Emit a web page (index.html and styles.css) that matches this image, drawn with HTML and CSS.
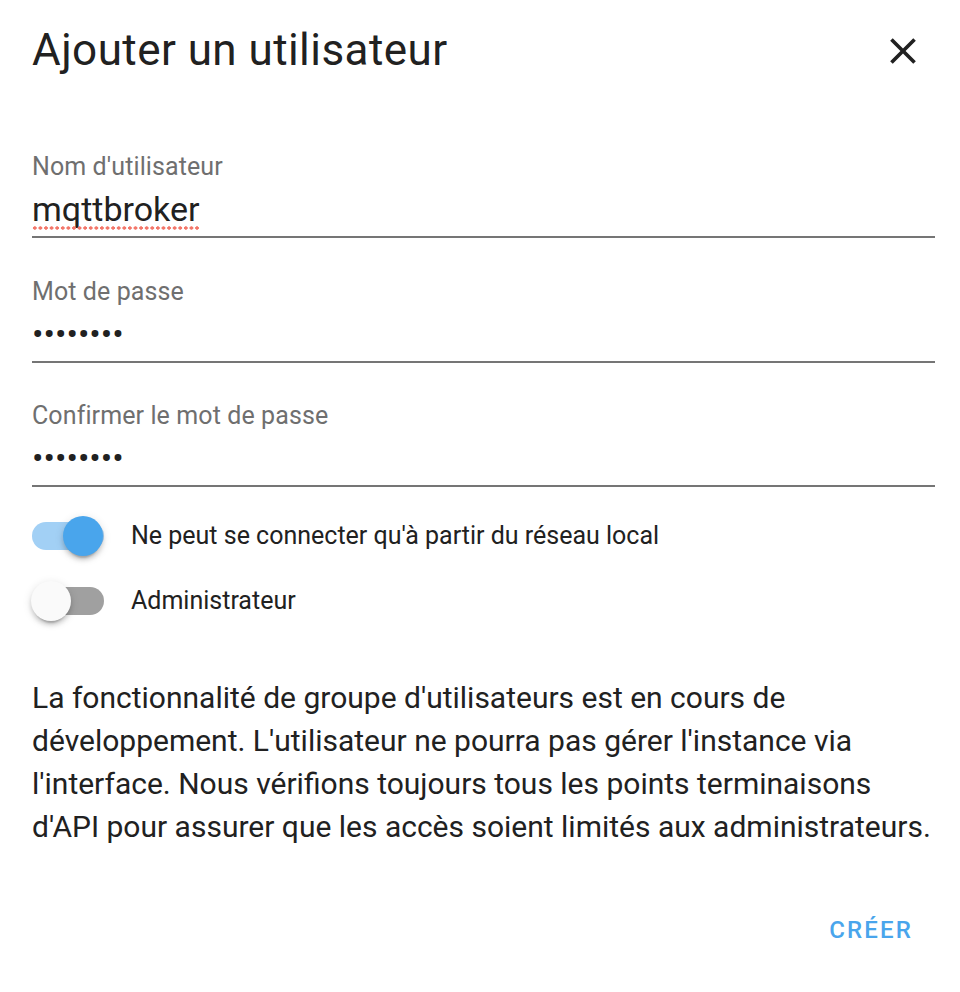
FILE: index.html
```html
<!DOCTYPE html>
<html lang="fr">
<head>
<meta charset="utf-8">
<title>Ajouter un utilisateur</title>
<link rel="stylesheet" href="styles.css">
</head>
<body>
<div class="dialog">
  <header class="header">
    <h1 class="title">Ajouter un utilisateur</h1>
    <svg class="close" viewBox="0 0 24 24" aria-label="Fermer"><path d="M19 6.41L17.59 5 12 10.59 6.41 5 5 6.41 10.59 12 5 17.59 6.41 19 12 13.41 17.59 19 19 17.59 13.41 12z"/></svg>
  </header>
  <div class="fields">
    <div class="field">
      <div class="label">Nom d'utilisateur</div>
      <div class="value"><span class="misspelled">mqttbroker</span></div>
      <div class="line"></div>
    </div>
    <div class="field">
      <div class="label">Mot de passe</div>
      <div class="value dots">••••••••</div>
      <div class="line"></div>
    </div>
    <div class="field">
      <div class="label">Confirmer le mot de passe</div>
      <div class="value dots">••••••••</div>
      <div class="line"></div>
    </div>
  </div>
  <div class="switches">
    <div class="row">
      <div class="switch on"><div class="track"></div><div class="knob"></div></div>
      <span class="switch-label">Ne peut se connecter qu'à partir du réseau local</span>
    </div>
    <div class="row">
      <div class="switch"><div class="track"></div><div class="knob"></div></div>
      <span class="switch-label">Administrateur</span>
    </div>
  </div>
  <p class="note">La fonctionnalité de groupe d'utilisateurs est en cours de développement. L'utilisateur ne pourra pas gérer l'instance via l'interface. Nous vérifions toujours tous les points terminaisons d'API pour assurer que les accès soient limités aux administrateurs.</p>
  <div class="actions">
    <button class="btn">CRÉER</button>
  </div>
</div>
</body>
</html>
```
FILE: styles.css
```css
* { box-sizing: border-box; }
html, body { margin: 0; padding: 0; background: #fff; }
body {
  font-family: Roboto, "Noto Sans", "Liberation Sans", sans-serif;
  color: #212121;
  width: 960px;
  height: 992px;
  overflow: hidden;
}
.dialog {
  padding: 24px 25px 0 32px;
}
.header {
  display: flex;
  align-items: center;
  justify-content: space-between;
}
.title {
  margin: 0;
  font-size: 44px;
  font-weight: 400;
  line-height: 52px;
  letter-spacing: 0.01em;
  color: #212121;
}
.close {
  width: 44px;
  height: 44px;
  fill: #212121;
  margin-right: 10px;
  margin-top: 2px;
}
.fields {
  margin-top: 76px;
  display: flex;
  flex-direction: column;
  gap: 38.5px;
}
.field {
  display: flex;
  flex-direction: column;
}
.label {
  font-size: 25px;
  line-height: 30px;
  color: #6f6f6f;
  letter-spacing: 0.1px;
}
.value {
  margin-top: 7px;
  font-size: 34px;
  line-height: 40px;
  height: 40px;
  color: #212121;
}
.dots {
  letter-spacing: 0;
}
.misspelled {
  position: relative;
  display: inline-block;
}
.misspelled::after {
  content: "";
  position: absolute;
  left: 0;
  right: 0;
  bottom: -1px;
  height: 4px;
  background-image: radial-gradient(circle, #f3776a 1.5px, transparent 1.8px);
  background-size: 5.6px 4px;
  background-repeat: repeat-x;
}
.line {
  margin-top: 7px;
  height: 2px;
  background: #757575;
}
.switches {
  margin-top: 29px;
  display: flex;
  flex-direction: column;
  gap: 25px;
}
.row {
  display: flex;
  align-items: center;
  height: 40px;
}
.switch {
  position: relative;
  width: 72px;
  height: 40px;
  flex: none;
}
.track {
  position: absolute;
  left: 0;
  top: 6px;
  width: 72px;
  height: 28px;
  border-radius: 14px;
  background: #a0a0a0;
}
.knob {
  position: absolute;
  top: 0;
  left: -1px;
  width: 40px;
  height: 40px;
  border-radius: 50%;
  background: #fafafa;
  box-shadow: 0 6px 2px -4px rgba(0,0,0,.2), 0 4px 4px 0 rgba(0,0,0,.14), 0 2px 10px 0 rgba(0,0,0,.12);
}
.switch.on .track { background: #a2d0f5; }
.switch.on .knob { left: 31px; background: #49a5ec; }
.switch-label {
  margin-left: 27px;
  font-size: 25px;
  line-height: 30px;
  color: #212121;
  letter-spacing: 0;
}
.note {
  margin: 55px 0 0 0;
  font-size: 30px;
  line-height: 43px;
  color: #212121;
  letter-spacing: 0;
}
.actions {
  margin-top: 46px;
  display: flex;
  justify-content: flex-end;
  padding-right: 6px;
}
.btn {
  font-family: Roboto, "Noto Sans", "Liberation Sans", sans-serif;
  font-size: 24px;
  font-weight: 500;
  letter-spacing: 2.14px;
  line-height: 72px;
  height: 72px;
  padding: 0 16px;
  border: 0;
  background: transparent;
  color: #49a5ec;
}
```
